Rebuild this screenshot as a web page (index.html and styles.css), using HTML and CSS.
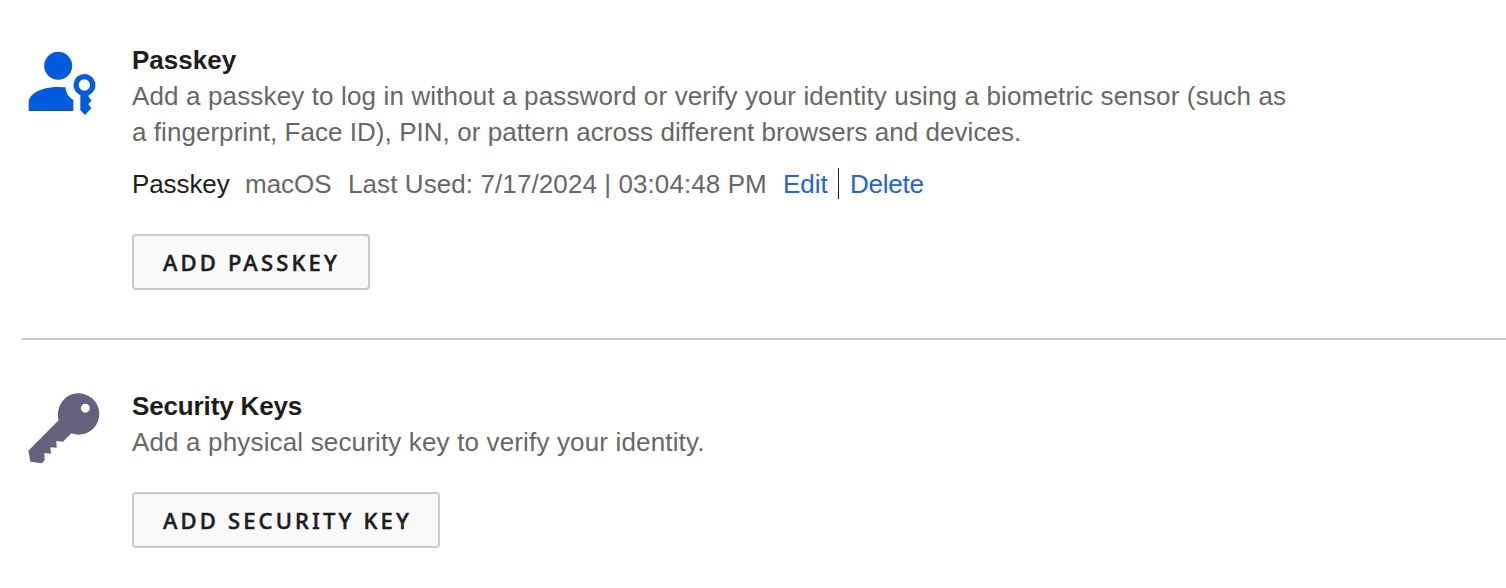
FILE: index.html
```html
<!DOCTYPE html>
<html lang="en">
<head>
<meta charset="utf-8">
<title>Security settings</title>
<link rel="stylesheet" href="styles.css">
</head>
<body>
<main class="settings">
  <section class="method">
    <svg class="icon" viewBox="0 0 270 255" aria-hidden="true">
      <g fill="#005cdc">
        <circle cx="114.500" cy="77.500" r="42"/>
        <path d="M26 213V186C27 160 66 141 114 141L136 142C138 159 146 172 160 180V213Z"/>
        <path fill-rule="evenodd" d="M193 102A33 33 0 0 1 206 165.500V171L215 182L205 192L214 205L195 225L181 211V165.500A33 33 0 0 1 193 102ZM193 118A17 17 0 1 0 193 152A17 17 0 1 0 193 118Z"/>
      </g>
    </svg>
    <div class="body">
      <h2 class="title">Passkey</h2>
      <p class="text"><span class="line-a">Add a passkey to log in without a password or verify your identity using a biometric sensor (such as</span> <br><span class="line-b">a fingerprint, Face ID), PIN, or pattern across different browsers and devices.</span></p>
      <div class="device">
        <span class="name">Passkey</span>
        <span class="os">macOS</span>
        <span class="used">Last Used: 7/17/2024 | 03:04:48 PM</span>
        <a class="link edit">Edit</a>
        <span class="bar"></span>
        <a class="link delete">Delete</a>
      </div>
      <button class="button passkey-button" type="button">ADD PASSKEY</button>
    </div>
  </section>
  <section class="method">
    <svg class="icon" viewBox="0 0 270 255" aria-hidden="true">
      <path fill="#65617d" fill-rule="evenodd" d="M25 197L116 106C106 66 134 25 175 25A62 62 0 1 1 154 145L129 170L109 168L110 188L91 187L93 206L73 204L74 226L66 235L31 230ZM196 56A13.500 13.500 0 1 0 196 83A13.500 13.500 0 1 0 196 56Z"/>
    </svg>
    <div class="body">
      <h2 class="title keys-title">Security Keys</h2>
      <p class="text"><span class="line-c">Add a physical security key to verify your identity.</span></p>
      <button class="button key-button" type="button">ADD SECURITY KEY</button>
    </div>
  </section>
</main>
</body>
</html>
```
FILE: styles.css
```css
* { box-sizing: border-box; }
body {
  margin: 0;
  background: #fff;
  color: #1d1d1d;
  font: 26px/36px "Liberation Sans", Arial, sans-serif;
}
.settings { padding-left: 22px; }
.method {
  display: flex;
  height: 340px;
  padding-top: 42px;
  border-bottom: 2px solid #cacaca;
}
.method + .method {
  height: 248px;
  padding-top: 48px;
  border-bottom: 0;
}
.icon {
  flex: none;
  width: 90px;
  height: 85px;
  margin: -2px 22px 0 -2px;
}
.method + .method .icon { margin-top: -3px; }
.body { white-space: nowrap; }
.title { margin: 0; font-size: 26px; font-weight: 700; }
.keys-title { letter-spacing: -0.14px; }
.text { margin: 0; color: #676767; }
.line-a { letter-spacing: 0.14px; }
.line-b { letter-spacing: 0.05px; }
.line-c { letter-spacing: 0.155px; }
.device {
  display: flex;
  align-items: center;
  margin-top: 16px;
  color: #676767;
}
.name { color: #1d1d1d; width: 113px; letter-spacing: -0.1px; }
.os { width: 103px; }
.used { width: 435px; letter-spacing: 0.09px; }
.link { color: #2463d8; }
.edit { width: 55px; }
.delete { letter-spacing: -0.25px; }
.bar { width: 1px; height: 31px; margin: 0 11px 1px 0; background: #1d1d1d; }
.button {
  display: block;
  height: 56px;
  margin-top: 32px;
  padding: 0 0 0 29px;
  border: 2px solid #cacaca;
  border-radius: 4px;
  background: #f9f9f9;
  color: #1d1d1d;
  font: 500 22px/52px "Noto Sans", sans-serif;
  letter-spacing: 3.15px;
  -webkit-text-stroke: 0.5px #1d1d1d;
  text-align: left;
}
.passkey-button { width: 238px; }
.key-button { width: 308px; }
```
